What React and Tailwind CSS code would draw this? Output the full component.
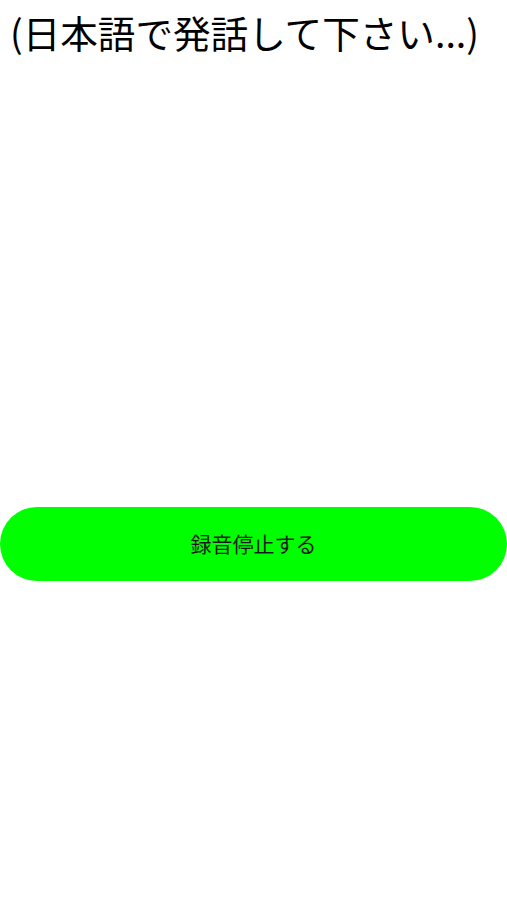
export default function App() {
  return (
    <div className="w-[507px] h-[900px] bg-white flex flex-col" style={{ fontFamily: '"Noto Sans CJK JP", "Noto Sans", sans-serif' }}>
      <h1 className="m-0 pl-[10px] pt-[8px] text-[37.6px] leading-[48px] font-normal text-black whitespace-nowrap">
        (日本語で発話して下さい...)
      </h1>
      <button className="mt-[451px] w-[507px] h-[74px] rounded-[37px] bg-[#00ff00] text-[21px] text-[#1a1a1a] flex items-center justify-center">
        録音停止する
      </button>
    </div>
  );
}
